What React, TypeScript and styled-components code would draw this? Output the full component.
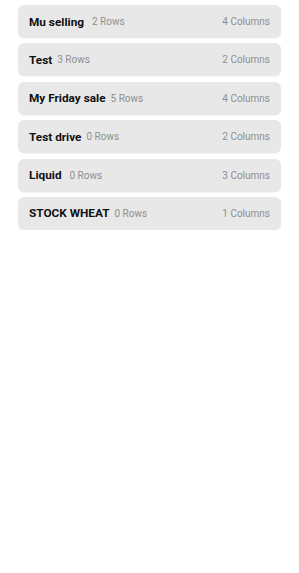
import { createGlobalStyle } from "styled-components";
import styled from "styled-components";

const GlobalStyle = createGlobalStyle`
    html, body {
        margin: 0;
        padding: 0;
        background: #ffffff;
        font-family: Roboto, "Liberation Sans", sans-serif;
    }
`;

const List = styled.main`
    display: flex;
    flex-direction: column;
    gap: 5.4px;
    padding: 5px 18px 0 18px;
`;

const Card = styled.div`
    display: flex;
    align-items: center;
    height: 33px;
    padding: 0 11px;
    background-color: #e8e8e8;
    border-radius: 6px;
    box-shadow: 0 1px 1px rgba(0, 0, 0, 0.04);
`;

const Name = styled.span`
    font-size: 11.8px;
    font-weight: 700;
    color: #111111;
    white-space: pre;
`;

const Meta = styled.span<{ $push?: boolean }>`
    font-size: 10px;
    color: #8f8f8f;
    margin-left: ${p => (p.$push ? "auto" : "5px")};
`;

type Sheet = { name: string; rows: number; columns: number };

const sheets: Sheet[] = [
    { name: "Mu selling ", rows: 2, columns: 4 },
    { name: "Test", rows: 3, columns: 2 },
    { name: "My Friday sale", rows: 5, columns: 4 },
    { name: "Test drive", rows: 0, columns: 2 },
    { name: "Liquid ", rows: 0, columns: 3 },
    { name: "STOCK WHEAT", rows: 0, columns: 1 },
];

export default function App() {
    return <>
        <GlobalStyle />
        <List>
            {sheets.map(s => (
                <Card key={s.name}>
                    <Name>{s.name}</Name>
                    <Meta>{s.rows} Rows</Meta>
                    <Meta $push>{s.columns} Columns</Meta>
                </Card>
            ))}
        </List>
    </>;
}
